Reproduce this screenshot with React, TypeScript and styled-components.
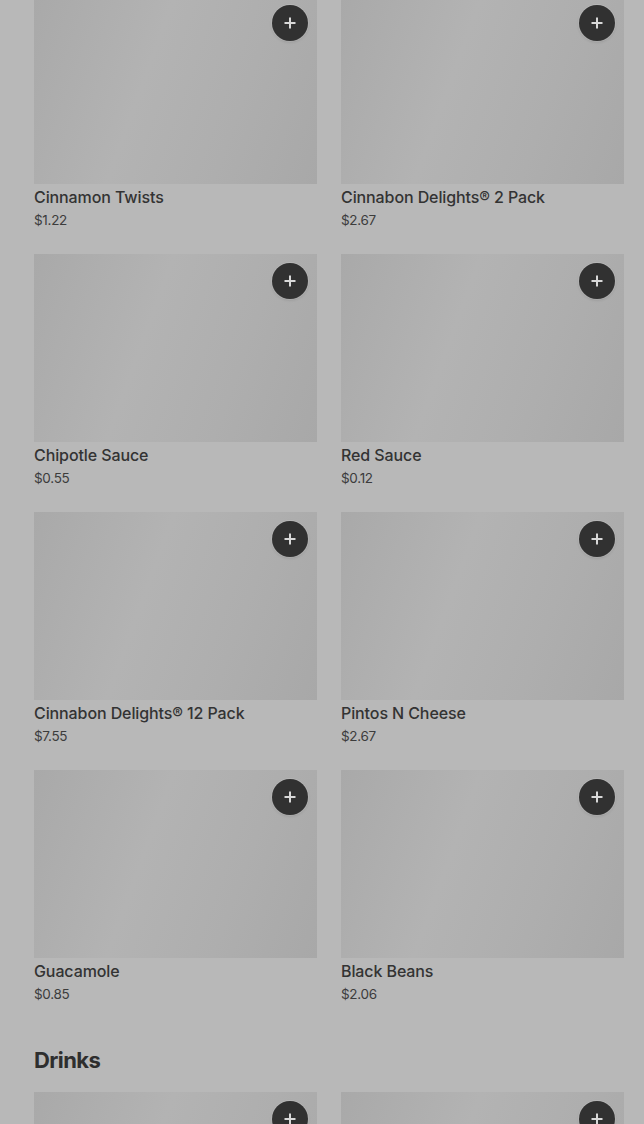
import React from "react";
import styled, { createGlobalStyle } from "styled-components";

const GlobalStyle = createGlobalStyle`
    html, body {
        margin: 0;
        padding: 0;
        background: #b8b8b8;
        font-family: Inter, "Liberation Sans", sans-serif;
        overflow: hidden;
    }
`;

const Page = styled.div`
    padding: 0 20px 0 34px;
    margin-top: -4px;
    width: 644px;
    box-sizing: border-box;
`;

const Section = styled.section`
    display: flex;
    flex-direction: column;
`;

const SectionTitle = styled.h2`
    margin: 42px 0 18px;
    font-size: 22px;
    line-height: 28px;
    font-weight: 700;
    letter-spacing: -0.6px;
    color: #2e2e2e;
`;

const Grid = styled.div`
    display: grid;
    grid-template-columns: 283px 283px;
    column-gap: 24px;
    row-gap: 24px;
`;

const Card = styled.div`
    display: flex;
    flex-direction: column;
`;

const Thumb = styled.div`
    position: relative;
    height: 188px;
    background: linear-gradient(110deg, #a9a9a9 0%, #b3b3b3 40%, #aeaeae 70%, #a8a8a8 100%);
`;

const AddButton = styled.button`
    position: absolute;
    top: 9px;
    right: 9px;
    width: 36px;
    height: 36px;
    border-radius: 50%;
    border: none;
    background: #313131;
    box-shadow: 0 0 0 1px rgba(255, 255, 255, 0.15), 0 1px 3px rgba(0, 0, 0, 0.15);
    display: flex;
    align-items: center;
    justify-content: center;
    padding: 0;
    cursor: pointer;
`;

const Name = styled.div`
    margin-top: 3px;
    font-size: 16px;
    line-height: 20px;
    font-weight: 500;
    letter-spacing: -0.1px;
    color: #333;
`;

const Price = styled.div`
    margin-top: 3px;
    font-size: 13.5px;
    line-height: 20px;
    letter-spacing: -0.3px;
    color: #3c3c3c;
`;

const PlusIcon = () => (
    <svg width="14" height="14" viewBox="0 0 14 14">
        <path d="M7 1.5v11M1.5 7h11" stroke="#d8d8d8" strokeWidth="2" />
    </svg>
);

type Item = { name: string; price: string };

const sides: Item[] = [
    { name: "Cinnamon Twists", price: "$1.22" },
    { name: "Cinnabon Delights® 2 Pack", price: "$2.67" },
    { name: "Chipotle Sauce", price: "$0.55" },
    { name: "Red Sauce", price: "$0.12" },
    { name: "Cinnabon Delights® 12 Pack", price: "$7.55" },
    { name: "Pintos N Cheese", price: "$2.67" },
    { name: "Guacamole", price: "$0.85" },
    { name: "Black Beans", price: "$2.06" },
];

const drinks = 2;

const ItemCard = ({ item }: { item: Item }) => (
    <Card>
        <Thumb>
            <AddButton aria-label={`Add ${item.name}`}>
                <PlusIcon />
            </AddButton>
        </Thumb>
        <Name>{item.name}</Name>
        <Price>{item.price}</Price>
    </Card>
);

export default function App() {
    return (
        <>
            <GlobalStyle />
            <Page>
                <Section>
                    <Grid>
                        {sides.map((item) => (
                            <ItemCard key={item.name} item={item} />
                        ))}
                    </Grid>
                </Section>
                <Section>
                    <SectionTitle>Drinks</SectionTitle>
                    <Grid>
                        {Array.from({ length: drinks }).map((_, i) => (
                            <Card key={i}>
                                <Thumb>
                                    <AddButton aria-label="Add drink">
                                        <PlusIcon />
                                    </AddButton>
                                </Thumb>
                            </Card>
                        ))}
                    </Grid>
                </Section>
            </Page>
        </>
    );
}
